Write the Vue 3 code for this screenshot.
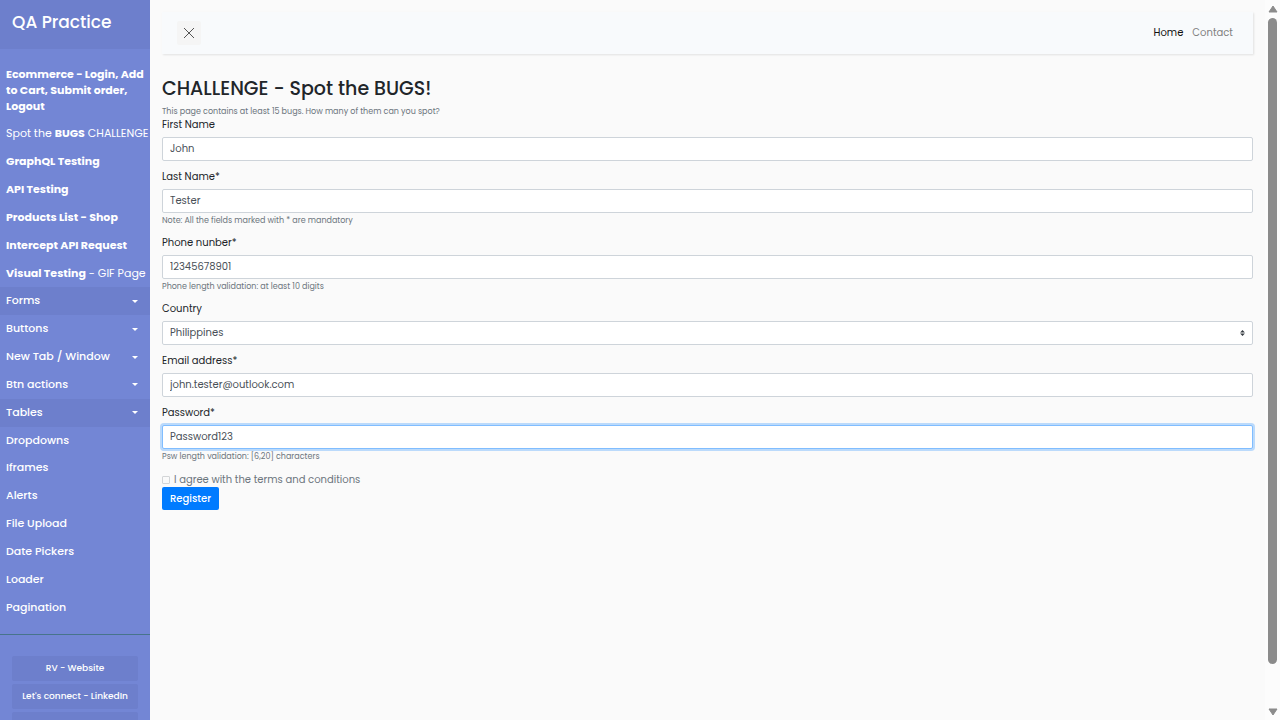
<script setup>
import { ref } from 'vue'

const topLinks = [
  [{ t: 'Ecommerce - Login, Add to Cart, Submit order, Logout', b: true }],
  [{ t: 'Spot the ' }, { t: 'BUGS', b: true }, { t: ' CHALLENGE' }],
  [{ t: 'GraphQL Testing', b: true }],
  [{ t: 'API Testing', b: true }],
  [{ t: 'Products List - Shop', b: true }],
  [{ t: 'Intercept API Request', b: true }],
  [{ t: 'Visual Testing', b: true }, { t: ' - GIF Page' }]
]
const menus = [
  { name: 'Forms', drop: true, active: true },
  { name: 'Buttons', drop: true },
  { name: 'New Tab / Window', drop: true },
  { name: 'Btn actions', drop: true },
  { name: 'Tables', drop: true, active: true },
  { name: 'Dropdowns' },
  { name: 'Iframes' },
  { name: 'Alerts' },
  { name: 'File Upload' },
  { name: 'Date Pickers' },
  { name: 'Loader' },
  { name: 'Pagination' }
]
const fields = ref([
  { id: 'firstName', label: 'First Name', value: 'John' },
  { id: 'lastName', label: 'Last Name*', value: 'Tester', note: 'Note: All the fields marked with * are mandatory' },
  { id: 'phone', label: 'Phone nunber*', value: '12345678901', note: 'Phone length validation: at least 10 digits' },
  { id: 'country', label: 'Country', value: 'Philippines', select: true },
  { id: 'email', label: 'Email address*', value: 'john.tester@outlook.com' },
  { id: 'password', label: 'Password*', value: 'Password123', note: 'Psw length validation: [6,20] characters', focus: true }
])
</script>

<template>
  <div class="page">
    <nav class="sidebar">
      <h3 class="brand">QA Practice</h3>
      <ul class="menu">
        <li v-for="(link, i) in topLinks" :key="i">
          <a href="#"><span v-for="(part, j) in link" :key="j" :class="{ bold: part.b }">{{ part.t }}</span></a>
        </li>
        <li v-for="m in menus" :key="m.name">
          <a href="#" class="medium" :class="{ active: m.active, drop: m.drop }">{{ m.name }}</a>
        </li>
      </ul>
      <ul class="ctas">
        <li><a href="#">RV - Website</a></li>
        <li><a href="#">Let's connect - LinkedIn</a></li>
        <li><a href="#"></a></li>
      </ul>
    </nav>

    <main class="content">
      <header class="topbar">
        <button type="button" class="toggle" aria-label="Toggle sidebar">
          <svg viewBox="0 0 12 12" width="12" height="12">
            <path d="M1 1L11 11M11 1L1 11" stroke="#555" stroke-width="1" fill="none" />
          </svg>
        </button>
        <div class="links">
          <a href="#" class="current">Home</a>
          <a href="#">Contact</a>
        </div>
      </header>

      <h2>CHALLENGE - Spot the BUGS!</h2>
      <small class="lead">This page contains at least 15 bugs. How many of them can you spot?</small>

      <form @submit.prevent>
        <div v-for="f in fields" :key="f.id" class="group">
          <label :for="f.id">{{ f.label }}</label>
          <div v-if="f.select" class="select">
            <select :id="f.id" v-model="f.value" class="control">
              <option>Philippines</option>
            </select>
            <svg viewBox="0 0 4 5" width="5" height="6">
              <path fill="#343a40" d="M2 0L0 2h4zm0 5L0 3h4z" />
            </svg>
          </div>
          <input v-else :id="f.id" v-model="f.value" type="text" class="control" :class="{ focused: f.focus }" />
          <small v-if="f.note">{{ f.note }}</small>
        </div>
        <div class="check">
          <input id="terms" type="checkbox" disabled />
          <label for="terms">I agree with the terms and conditions</label>
        </div>
        <button type="submit" class="submit">Register</button>
      </form>
    </main>

    <div class="scrollbar" aria-hidden="true">
      <svg viewBox="0 0 10 8" width="10" height="8"><path d="M5 1L9 7H1Z" fill="#8b8b8b" stroke="#8b8b8b" stroke-linejoin="round" /></svg>
      <div class="track"><div class="thumb"></div></div>
      <svg viewBox="0 0 10 8" width="10" height="8"><path d="M5 7L1 1H9Z" fill="#8b8b8b" stroke="#8b8b8b" stroke-linejoin="round" /></svg>
    </div>
  </div>
</template>

<style>
body {
  background: #fafafa;
}
</style>

<style scoped>
* {
  box-sizing: border-box;
}
.page {
  display: flex;
  height: 100vh;
  overflow: hidden;
  background: #fafafa;
  color: #212529;
  font-family: Poppins, Inter, sans-serif;
  font-size: 10px;
}
a {
  color: inherit;
  text-decoration: none;
}
ul {
  list-style: none;
  margin: 0;
  padding: 0;
}
.sidebar {
  flex: none;
  width: 150px;
  overflow: hidden;
  background: #7386d5;
  color: #fff;
}
.brand {
  margin: 0;
  padding: 12px 12px 17px;
  background: #6d7fcc;
  font-size: 17px;
  font-weight: 500;
  line-height: 20px;
}
.menu {
  padding: 12px 0 13px;
  border-bottom: 1px solid #47748b;
  font-size: 11px;
  line-height: 1.44;
}
.menu a {
  display: block;
  padding: 6px 0 6px 6px;
}
.bold {
  font-weight: 700;
}
.medium {
  font-weight: 500;
}
.menu .active {
  background: #6d7fcc;
}
.menu .drop {
  display: flex;
  align-items: center;
  justify-content: space-between;
  padding-right: 12px;
}
.drop::after {
  content: '';
  border: 3px solid transparent;
  border-top-color: #fff;
  border-bottom: 0;
}
.ctas {
  padding: 21px 12px;
  font-size: 9px;
  font-weight: 500;
  line-height: 25px;
  text-align: center;
}
.ctas a {
  display: block;
  min-height: 25px;
  margin-bottom: 3px;
  border-radius: 2px;
  background: #6d7fcc;
  white-space: nowrap;
}
.content {
  flex: 1;
  min-width: 0;
  padding: 12px;
}
.topbar {
  display: flex;
  align-items: center;
  justify-content: space-between;
  height: 42px;
  margin-bottom: 23px;
  padding: 0 20px 0 15px;
  background: #f8fafc;
  box-shadow: 1px 1px 2px rgba(0, 0, 0, 0.1);
}
.toggle {
  display: flex;
  align-items: center;
  justify-content: center;
  width: 24px;
  height: 24px;
  padding: 0;
  border: 0;
  border-radius: 2px;
  background: #f5f5f5;
}
.links {
  display: flex;
  gap: 9px;
  color: #808080;
}
.current {
  color: #111;
}
h2 {
  margin: 0 0 5px;
  font-size: 19px;
  font-weight: 500;
  line-height: 24px;
}
small {
  display: block;
  color: #6c757d;
  font-size: 8px;
  line-height: 13px;
}
.lead {
  line-height: 11px;
}
.group {
  margin-bottom: 8px;
}
.group label {
  display: block;
  margin-bottom: 5px;
  line-height: 15px;
}
.group small {
  margin-top: 1px;
}
.control {
  display: block;
  width: 100%;
  height: 24px;
  padding: 0 7px 1px;
  border: 1px solid #ced4da;
  border-radius: 2px;
  outline: 0;
  background: #fff;
  color: #495057;
  font: inherit;
  appearance: none;
}
.focused {
  border-color: #80bdff;
  box-shadow: 0 0 0 2px rgba(0, 123, 255, 0.25);
}
.select {
  position: relative;
}
.select svg {
  position: absolute;
  top: 9px;
  right: 8px;
}
.check {
  display: flex;
  align-items: center;
  gap: 4px;
  padding-top: 1px;
  color: #6c757d;
  line-height: 15px;
}
.check input {
  width: 8px;
  height: 8px;
  margin: 0;
  border: 1px solid #d3d5d7;
  border-radius: 1px;
  appearance: none;
}
.submit {
  display: block;
  padding: 0 8px;
  border: 0;
  border-radius: 2px;
  background: #007bff;
  color: #fff;
  font: inherit;
  font-weight: 500;
  line-height: 23px;
}
.scrollbar {
  display: flex;
  flex: none;
  flex-direction: column;
  align-items: center;
  width: 15px;
  padding: 5px 0 4px;
  background: #fcfcfc;
}
.scrollbar svg {
  flex: none;
}
.track {
  display: flex;
  flex: 1;
  padding: 5px 0 44px;
}
.thumb {
  width: 9px;
  border-radius: 5px;
  background: #8b8b8b;
}
</style>
